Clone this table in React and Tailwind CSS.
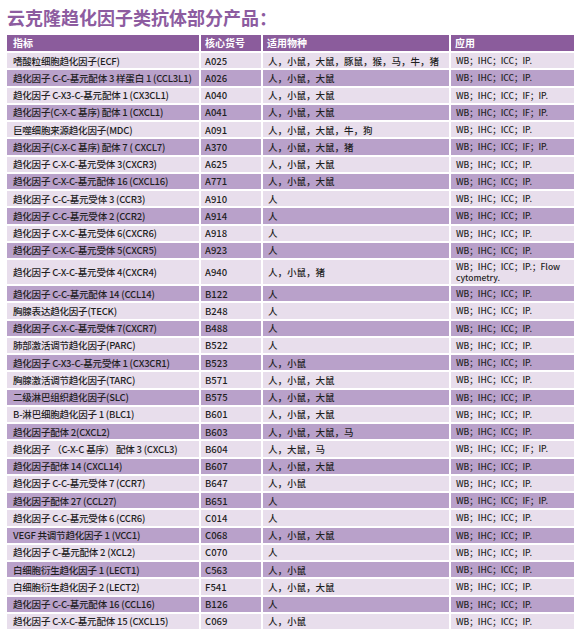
const rows = [
  ["嗜酸粒细胞趋化因子(ECF)", "A025", "人，小鼠，大鼠，豚鼠，猴，马，牛，猪", "WB；IHC；ICC；IP."],
  ["趋化因子 C-C-基元配体 3 样蛋白 1 (CCL3L1)", "A026", "人，小鼠，大鼠", "WB；IHC；ICC；IP."],
  ["趋化因子 C-X3-C-基元配体 1 (CX3CL1)", "A040", "人，小鼠，大鼠", "WB；IHC；ICC；IF；IP."],
  ["趋化因子(C-X-C 基序) 配体 1 (CXCL1)", "A041", "人，小鼠，大鼠", "WB；IHC；ICC；IF；IP."],
  ["巨噬细胞来源趋化因子(MDC)", "A091", "人，小鼠，大鼠，牛，狗", "WB；IHC；ICC；IP."],
  ["趋化因子(C-X-C 基序) 配体 7 ( CXCL7)", "A370", "人，小鼠，大鼠，猪", "WB；IHC；ICC；IF；IP."],
  ["趋化因子 C-X-C-基元受体 3(CXCR3)", "A625", "人，小鼠，大鼠", "WB；IHC；ICC；IP."],
  ["趋化因子 C-X-C-基元配体 16 (CXCL16)", "A771", "人，小鼠，大鼠", "WB；IHC；ICC；IP."],
  ["趋化因子 C-C-基元受体 3 (CCR3)", "A910", "人", "WB；IHC；ICC；IP."],
  ["趋化因子 C-C-基元受体 2 (CCR2)", "A914", "人", "WB；IHC；ICC；IP."],
  ["趋化因子 C-X-C-基元受体 6(CXCR6)", "A918", "人", "WB；IHC；ICC；IP."],
  ["趋化因子 C-X-C-基元受体 5(CXCR5)", "A923", "人", "WB；IHC；ICC；IP."],
  ["趋化因子 C-X-C-基元受体 4(CXCR4)", "A940", "人，小鼠，猪", "WB；IHC；ICC；IP.；Flow cytometry."],
  ["趋化因子 C-C-基元配体 14 (CCL14)", "B122", "人", "WB；IHC；ICC；IP."],
  ["胸腺表达趋化因子(TECK)", "B248", "人", "WB；IHC；ICC；IP."],
  ["趋化因子 C-X-C-基元受体 7(CXCR7)", "B488", "人", "WB；IHC；ICC；IP."],
  ["肺部激活调节趋化因子(PARC)", "B522", "人", "WB；IHC；ICC；IP."],
  ["趋化因子 C-X3-C-基元受体 1 (CX3CR1)", "B523", "人，小鼠", "WB；IHC；ICC；IP."],
  ["胸腺激活调节趋化因子(TARC)", "B571", "人，小鼠，大鼠", "WB；IHC；ICC；IP."],
  ["二级淋巴组织趋化因子(SLC)", "B575", "人，小鼠，大鼠", "WB；IHC；ICC；IP."],
  ["B-淋巴细胞趋化因子 1 (BLC1)", "B601", "人，小鼠，大鼠", "WB；IHC；ICC；IP."],
  ["趋化因子配体 2(CXCL2)", "B603", "人，小鼠，大鼠，马", "WB；IHC；ICC；IP."],
  ["趋化因子 （C-X-C 基序） 配体 3 (CXCL3)", "B604", "人，大鼠，马", "WB；IHC；ICC；IF；IP."],
  ["趋化因子配体 14 (CXCL14)", "B607", "人，小鼠，大鼠", "WB；IHC；ICC；IP."],
  ["趋化因子 C-C-基元受体 7 (CCR7)", "B647", "人，小鼠", "WB；IHC；ICC；IP."],
  ["趋化因子配体 27 (CCL27)", "B651", "人", "WB；IHC；ICC；IF；IP."],
  ["趋化因子 C-C-基元受体 6 (CCR6)", "C014", "人", "WB；IHC；ICC；IP."],
  ["VEGF 共调节趋化因子 1 (VCC1)", "C068", "人，小鼠，大鼠", "WB；IHC；ICC；IP."],
  ["趋化因子 C-基元配体 2 (XCL2)", "C070", "人", "WB；IHC；ICC；IP."],
  ["白细胞衍生趋化因子 1 (LECT1)", "C563", "人，小鼠", "WB；IHC；ICC；IP."],
  ["白细胞衍生趋化因子 2 (LECT2)", "F541", "人，小鼠，大鼠", "WB；IHC；ICC；IP."],
  ["趋化因子 C-C-基元配体 16 (CCL16)", "B126", "人", "WB；IHC；ICC；IP."],
  ["趋化因子 C-X-C-基元配体 15 (CXCL15)", "C069", "人，小鼠", "WB；IHC；ICC；IP."],
];

const cols = "grid grid-cols-[192px_60px_186px_123px] gap-x-[2px]";
const cjk = { fontFamily: '"Noto Sans CJK SC", sans-serif' };

export default function App() {
  return (
    <div className="w-[583px] h-[632px] bg-white overflow-hidden pt-[5px] pl-[7px] text-[#1f1f1f]" style={cjk}>
      <h1 className="text-[18px] leading-[25px] font-bold text-[#8d5ca0]">云克隆趋化因子类抗体部分产品：</h1>
      <div className="mt-[5px] flex flex-col gap-y-[2px] w-[567px]">
        <div className={`${cols} h-[16px] text-white font-bold text-[10px] leading-[16px]`}>
          <div className="bg-[#8b5c9c] pl-[6px]">指标</div>
          <div className="bg-[#8b5c9c] pl-[4px]">核心货号</div>
          <div className="bg-[#8b5c9c] pl-[4px]">适用物种</div>
          <div className="bg-[#8b5c9c] pl-[4px]">应用</div>
        </div>
        {rows.map((r, i) => {
          const bg = i % 2 === 0 ? "bg-[#e8deec]" : "bg-[#b9a1ca]";
          const tall = r[1] === "A940";
          return (
            <div key={r[1]} className={`${cols} ${tall ? "h-[24px]" : "h-[15.25px]"} text-[9.5px] font-medium`}>
              <div className={`${bg} pl-[6px] flex items-center whitespace-nowrap tracking-[-0.2px]`}>{r[0]}</div>
              <div className={`${bg} pl-[4px] flex items-center`}>{r[1]}</div>
              <div className={`${bg} pl-[5px] flex items-center`}>{r[2]}</div>
              <div className={`${bg} pl-[5px] pr-[4px] flex items-center text-[8.5px] leading-[11px]`}>
                <span>{r[3]}</span>
              </div>
            </div>
          );
        })}
      </div>
    </div>
  );
}
